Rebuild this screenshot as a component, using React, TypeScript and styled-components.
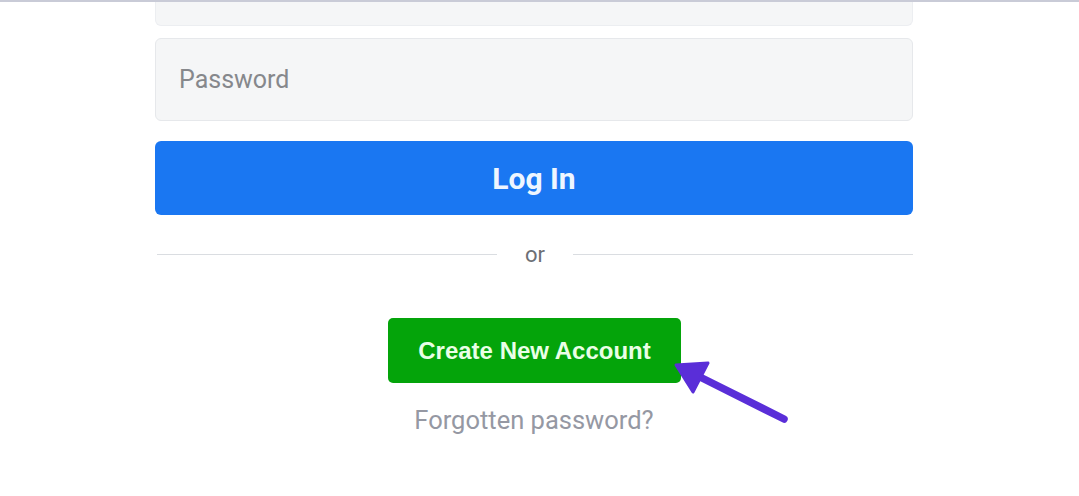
import React from "react";
import styled, { createGlobalStyle } from "styled-components";

const Global = createGlobalStyle`
  html, body { margin: 0; padding: 0; background: #ffffff; }
  body { font-family: Roboto, "Liberation Sans", Arial, sans-serif; }
`;

const Page = styled.div`
  position: relative;
  width: 1079px;
  height: 496px;
  overflow: hidden;
  background: #ffffff;
  border-top: 2px solid #c9cbd7;
  box-sizing: border-box;
`;

const Form = styled.div`
  width: 758px;
  margin-left: 155px;
  display: flex;
  flex-direction: column;
`;

const CutInput = styled.div`
  height: 24px;
  background: #f5f6f7;
  border: 1px solid #eceef1;
  border-top: none;
  border-radius: 0 0 6px 6px;
  box-sizing: border-box;
`;

const Input = styled.div`
  margin-top: 12px;
  height: 83px;
  background: #f5f6f7;
  border: 1px solid #e6e8eb;
  border-radius: 6px;
  box-sizing: border-box;
  display: flex;
  align-items: center;
  padding-left: 23px;
  font-size: 25px;
  color: #86888c;
`;

const LoginButton = styled.div`
  margin-top: 20px;
  height: 74px;
  background: #1a77f2;
  border-radius: 6px;
  display: flex;
  align-items: center;
  justify-content: center;
  color: #eef6ff;
  font-weight: 700;
  font-size: 30px;
`;

const Divider = styled.div`
  margin-top: 26px;
  height: 26px;
  display: flex;
  align-items: center;
  gap: 28px;
  padding-left: 2px;
`;

const Line = styled.div`
  flex: 1;
  height: 1px;
  background: #dadde1;
`;

const Or = styled.span`
  font-size: 22px;
  color: #6d7075;
`;

const Center = styled.div`
  display: flex;
  flex-direction: column;
  align-items: center;
`;

const CreateButton = styled.div`
  margin-top: 51px;
  margin-left: 1px;
  width: 293px;
  height: 65px;
  background: #04a40a;
  border-radius: 5px;
  display: flex;
  align-items: center;
  justify-content: center;
  color: #e9ffe6;
  font-family: "Liberation Sans", Arial, sans-serif;
  font-weight: 700;
  font-size: 24px;
`;

const Forgot = styled.div`
  margin-top: 22px;
  font-size: 25.5px;
  color: #9598a3;
`;

const Arrow = styled.svg`
  position: absolute;
  left: 660px;
  top: 350px;
`;

export default function App() {
  return (
    <>
      <Global />
      <Page>
        <Form>
          <CutInput />
          <Input>Password</Input>
          <LoginButton>Log In</LoginButton>
          <Divider>
            <Line />
            <Or>or</Or>
            <Line />
          </Divider>
          <Center>
            <CreateButton>Create New Account</CreateButton>
            <Forgot>Forgotten password?</Forgot>
          </Center>
        </Form>
        <Arrow width="140" height="80" viewBox="0 0 140 80">
          <line x1="124" y1="67" x2="42" y2="26" stroke="#5a2ed8" strokeWidth="7.5" strokeLinecap="round" />
          <polygon points="16,13 48,11 33,40" fill="#5a2ed8" stroke="#5a2ed8" strokeWidth="3" strokeLinejoin="round" />
        </Arrow>
      </Page>
    </>
  );
}
